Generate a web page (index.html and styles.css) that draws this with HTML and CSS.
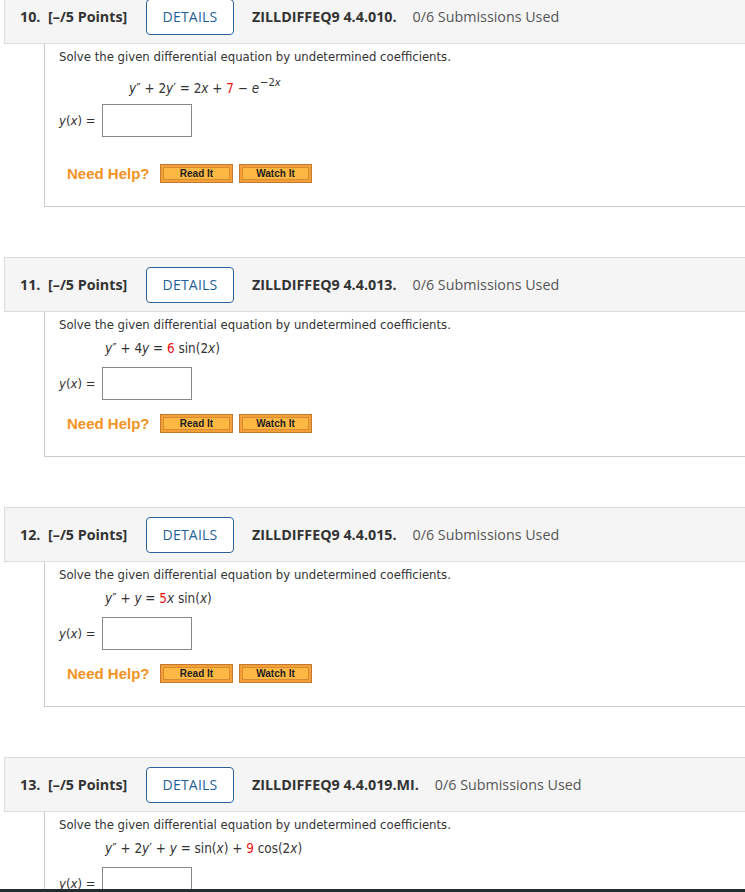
FILE: index.html
```html
<!DOCTYPE html>
<html>
<head>
<meta charset="utf-8">
<link rel="stylesheet" href="styles.css">
</head>
<body>
<div class="page">

  <section class="question q-first">
    <div class="q-head">
      <span class="q-num">10.</span>
      <span class="q-points">[–/5 Points]</span>
      <span class="details">DETAILS</span>
      <span class="q-code">ZILLDIFFEQ9 4.4.010.</span>
      <span class="q-subs">0/6 Submissions Used</span>
    </div>
    <div class="q-body">
      <p class="prompt">Solve the given differential equation by undetermined coefficients.</p>
      <p class="eq eq-wide"><i>y</i>″ + 2<i>y</i>′ = 2<i>x</i> + <span class="red">7</span> − <i>e</i><sup class="sup">−2<i>x</i></sup></p>
      <div class="answer answer-tight"><span class="lbl"><i>y</i>(<i>x</i>) =</span><span class="box"></span></div>
      <div class="help help-far"><span class="need">Need Help?</span><span class="btn">Read It</span><span class="btn">Watch It</span></div>
    </div>
  </section>

  <section class="question">
    <div class="q-head">
      <span class="q-num">11.</span>
      <span class="q-points">[–/5 Points]</span>
      <span class="details">DETAILS</span>
      <span class="q-code">ZILLDIFFEQ9 4.4.013.</span>
      <span class="q-subs">0/6 Submissions Used</span>
    </div>
    <div class="q-body">
      <p class="prompt">Solve the given differential equation by undetermined coefficients.</p>
      <p class="eq"><i>y</i>″ + 4<i>y</i> = <span class="red">6</span> sin(2<i>x</i>)</p>
      <div class="answer"><span class="lbl"><i>y</i>(<i>x</i>) =</span><span class="box"></span></div>
      <div class="help"><span class="need">Need Help?</span><span class="btn">Read It</span><span class="btn">Watch It</span></div>
    </div>
  </section>

  <section class="question">
    <div class="q-head">
      <span class="q-num">12.</span>
      <span class="q-points">[–/5 Points]</span>
      <span class="details">DETAILS</span>
      <span class="q-code">ZILLDIFFEQ9 4.4.015.</span>
      <span class="q-subs">0/6 Submissions Used</span>
    </div>
    <div class="q-body">
      <p class="prompt">Solve the given differential equation by undetermined coefficients.</p>
      <p class="eq"><i>y</i>″ + <i>y</i> = <span class="red">5</span><i>x</i> sin(<i>x</i>)</p>
      <div class="answer"><span class="lbl"><i>y</i>(<i>x</i>) =</span><span class="box"></span></div>
      <div class="help"><span class="need">Need Help?</span><span class="btn">Read It</span><span class="btn">Watch It</span></div>
    </div>
  </section>

  <section class="question">
    <div class="q-head">
      <span class="q-num">13.</span>
      <span class="q-points">[–/5 Points]</span>
      <span class="details">DETAILS</span>
      <span class="q-code">ZILLDIFFEQ9 4.4.019.MI.</span>
      <span class="q-subs">0/6 Submissions Used</span>
    </div>
    <div class="q-body">
      <p class="prompt">Solve the given differential equation by undetermined coefficients.</p>
      <p class="eq"><i>y</i>″ + 2<i>y</i>′ + <i>y</i> = sin(<i>x</i>) + <span class="red">9</span> cos(2<i>x</i>)</p>
      <div class="answer"><span class="lbl"><i>y</i>(<i>x</i>) =</span><span class="box"></span></div>
      <div class="help"><span class="need">Need Help?</span><span class="btn">Read It</span><span class="btn">Watch It</span></div>
    </div>
  </section>

</div>
<div class="footer-bar"></div>
</body>
</html>
```

FILE: styles.css
```css
html, body {
  margin: 0;
  padding: 0;
  background: #ffffff;
  overflow: hidden;
}

.page {
  margin-top: -11px;
  width: 760px;
}

.question {
  margin-bottom: 50px;
}

.q-head {
  display: flex;
  align-items: center;
  height: 53px;
  margin-left: 4px;
  padding-left: 15px;
  background: #f5f5f5;
  border: 1px solid #dcdcdc;
  border-right: none;
  font-family: "Open Sans", "Liberation Sans", sans-serif;
  font-size: 14.3px;
  color: #333333;
  white-space: nowrap;
}

.q-num {
  font-weight: 700;
  width: 28px;
}

.q-points {
  font-weight: 700;
  width: 98px;
}

.details {
  box-sizing: border-box;
  width: 88px;
  height: 36px;
  display: flex;
  align-items: center;
  justify-content: center;
  border: 1px solid #2b6399;
  border-radius: 4px;
  background: #ffffff;
  color: #1f5f96;
  font-size: 14px;
  letter-spacing: 0.2px;
}

.q-code {
  font-weight: 700;
  margin-left: 18px;
  color: #333333;
}

.q-subs {
  margin-left: 16px;
  color: #555555;
}

.q-body {
  margin-left: 44px;
  border-left: 1px solid #cccccc;
  border-bottom: 1px solid #cccccc;
  padding: 5px 0 23px 14px;
  font-family: "DejaVu Sans Condensed", "DejaVu Sans", sans-serif;
  font-size: 13px;
  color: #333333;
}

.prompt {
  margin: 0;
  height: 16px;
  line-height: 16px;
}

.eq {
  margin: 8px 0 0 46px;
  height: 16px;
  line-height: 16px;
  font-size: 13.4px;
  white-space: nowrap;
}

.eq-wide {
  margin-top: 16px;
  margin-left: 70px;
}

.eq i {
  font-style: italic;
}

.red {
  color: #ee1111;
}

.sup {
  font-size: 11px;
  line-height: 0;
  vertical-align: 7px;
  margin-left: 1px;
}

.answer {
  display: flex;
  align-items: center;
  margin-top: 10px;
  height: 33px;
}

.answer-tight {
  margin-top: 7px;
}

.lbl {
  width: 43px;
  font-size: 13px;
  white-space: nowrap;
}

.box {
  box-sizing: border-box;
  width: 90px;
  height: 33px;
  border: 1px solid #888888;
  background: #ffffff;
}

.help {
  display: flex;
  align-items: center;
  margin-top: 14px;
  margin-left: 8px;
  height: 19px;
}

.help-far {
  margin-top: 27px;
}

.need {
  font-family: "Liberation Sans", Arial, sans-serif;
  font-weight: 700;
  font-size: 15px;
  color: #f29322;
  width: 93px;
  white-space: nowrap;
}

.btn {
  box-sizing: border-box;
  width: 73px;
  height: 19px;
  margin-right: 6px;
  display: flex;
  align-items: center;
  justify-content: center;
  background: #fdb843;
  border: 1px solid #c27a30;
  box-shadow: inset 0 0 0 2px #f5a036, inset 0 0 0 3px #d98a34;
  font-family: "Liberation Sans", Arial, sans-serif;
  font-weight: 700;
  font-size: 10px;
  color: #1e1e1e;
}

.footer-bar {
  position: fixed;
  left: 0;
  right: 0;
  bottom: 0;
  height: 3px;
  background: #1f2d31;
}
```
